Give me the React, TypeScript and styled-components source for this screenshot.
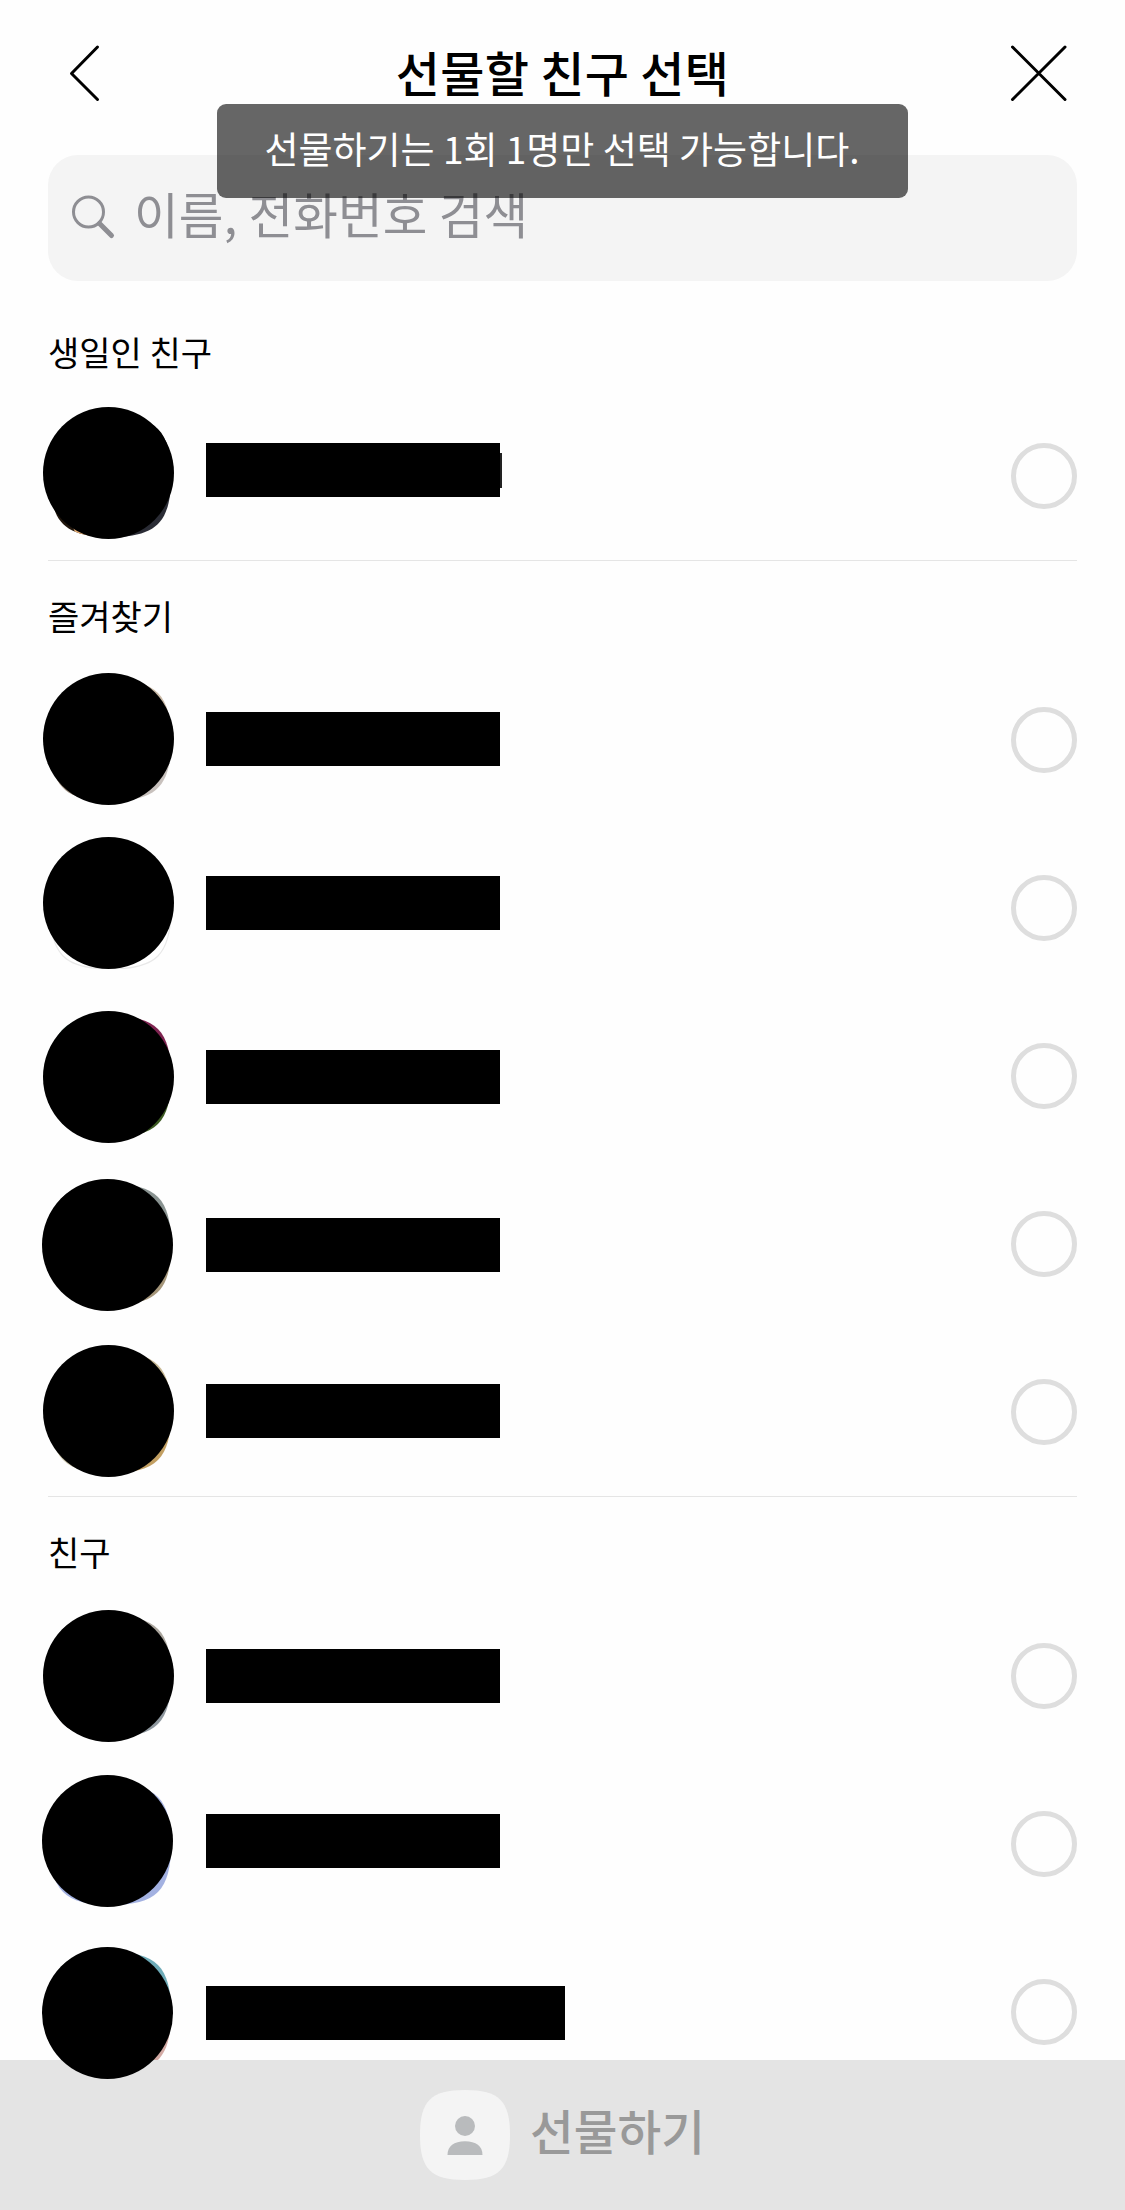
import React from 'react';
import styled, { createGlobalStyle } from 'styled-components';

const GlobalStyle = createGlobalStyle`
  * { box-sizing: border-box; }
  body {
    margin: 0;
    background: #fefefe;
    color: #000;
    font-family: "Noto Sans CJK KR", "Noto Sans", sans-serif;
  }
  button, input { font: inherit; border: 0; padding: 0; background: none; }
`;

const SQUIRCLE = 'M0 60C0 14.5 14.5 0 60 0C105.5 0 120 14.5 120 60C120 105.5 105.5 120 60 120C14.5 120 0 105.5 0 60Z';

const Screen = styled.main`
  position: relative;
  display: flex;
  flex-direction: column;
  width: 1125px;
  height: 2210px;
  overflow: hidden;
  background: #fefefe;
`;

const Header = styled.header`
  display: flex;
  align-items: center;
  justify-content: space-between;
  height: 155px;
  padding: 0 56px 9px 68px;
`;

const IconButton = styled.button`
  display: flex;
  width: 60px;
  height: 60px;
`;

const Title = styled.h1`
  margin: 0 0 0 -12px;
  padding-bottom: 5px;
  font-size: 48px;
  line-height: 60px;
  font-weight: 500;
  letter-spacing: 0.3px;
`;

const Toast = styled.div`
  position: absolute;
  z-index: 5;
  top: 104px;
  left: 217px;
  display: flex;
  align-items: center;
  justify-content: center;
  width: 691px;
  height: 94px;
  padding: 0 1px 6px 0;
  border-radius: 9px;
  background: rgba(0, 0, 0, 0.6);
  color: #fff;
  font-size: 37px;
  line-height: 50px;
  white-space: nowrap;
`;

const SearchBox = styled.label`
  display: flex;
  align-items: center;
  gap: 18px;
  height: 126px;
  margin: 0 48px;
  padding: 0 22px;
  border-radius: 30px;
  background: #f4f4f4;
`;

const SearchText = styled.span`
  padding-bottom: 11px;
  color: #8e8e93;
  font-size: 48.5px;
  line-height: 60px;
  letter-spacing: 0.2px;
`;

const Section = styled.section`
  margin: 0 48px;
  & + & { border-top: 1px solid #e5e5e5; }
`;

const SectionTitle = styled.h2<{ $height: number; $pad: number }>`
  height: ${(p) => p.$height}px;
  margin: 0;
  padding-top: ${(p) => p.$pad}px;
  font-size: 34px;
  line-height: 50px;
  font-weight: 400;
`;

const Row = styled.div`
  display: flex;
  align-items: center;
  height: 168px;
`;

const Avatar = styled.div`
  position: relative;
  flex: none;
  width: 120px;
  height: 120px;
`;

const Photo = styled.svg`
  display: block;
  width: 121px;
  height: 121px;
  margin-left: 1.5px;
`;

const AvatarCover = styled.div<{ $x: number; $y: number }>`
  position: absolute;
  z-index: 3;
  left: ${(p) => p.$x}px;
  top: ${(p) => p.$y}px;
  width: 131px;
  height: 132px;
  border-radius: 50%;
  background: #000;
`;

const NameCell = styled.div`
  display: flex;
  flex: 1;
  align-self: stretch;
  padding-left: 38px;
`;

const NameBar = styled.div<{ $width: number; $top: number }>`
  width: ${(p) => p.$width}px;
  height: 54px;
  margin-top: ${(p) => p.$top}px;
  background: #000;
`;

const NameEdge = styled.div`
  width: 2px;
  height: 35px;
  margin-top: 61px;
  background: #222;
`;

const Radio = styled.button`
  width: 66px;
  height: 66px;
  border: 5px solid #dedede;
  border-radius: 50%;
`;

const Footer = styled.footer`
  position: absolute;
  z-index: 2;
  left: 0;
  right: 0;
  bottom: 0;
  display: flex;
  align-items: center;
  justify-content: center;
  gap: 20px;
  height: 150px;
  background: #e4e4e4;
  color: #999;
`;

const FooterText = styled.span`
  padding-bottom: 10px;
  font-size: 47.5px;
  line-height: 60px;
  font-weight: 500;
`;

/* Photo corners run top-left, top-right, bottom-left, bottom-right. */
type Friend = {
  corners: [string, string, string, string];
  outline?: boolean;
  cover: [number, number];
  barTop: number;
  barWidth?: number;
  edge?: boolean;
};

const birthday: Friend[] = [
  { corners: ['#000', '#000', '#20160c', '#2a2c35'], cover: [-5, -9], barTop: 51, edge: true },
];

const favorites: Friend[] = [
  { corners: ['#eee', '#c9b9a6', '#9b8c7c', '#c8c1bd'], cover: [-5, -7], barTop: 56 },
  { corners: ['#fff', '#fff', '#fff', '#fff'], outline: true, cover: [-5, -11], barTop: 52 },
  { corners: ['#477064', '#7e2350', '#5b8430', '#3c5a22'], cover: [-5, -5], barTop: 58 },
  { corners: ['#000', '#899391', '#000', '#a5967a'], cover: [-6, -5], barTop: 58 },
  { corners: ['#000', '#c5b691', '#c9c3a8', '#c29f62'], cover: [-5, -7], barTop: 56 },
];

const friends: Friend[] = [
  { corners: ['#000', '#aaa59d', '#1a100a', '#8e979e'], cover: [-5, -6], barTop: 57 },
  { corners: ['#a3b1e1', '#a3b1e1', '#a3b1e1', '#a3b1e1'], cover: [-6, -9], barTop: 54 },
  { corners: ['#447e6a', '#6eabb8', '#000', '#d2a9a3'], cover: [-6, -5], barTop: 58, barWidth: 359 },
];

function FriendRow({ friend, id }: { friend: Friend; id: string }) {
  const [tl, tr, bl, br] = friend.corners;
  return (
    <Row>
      <Avatar>
        <Photo viewBox="0 0 120 120">
          <clipPath id={id}><path d={SQUIRCLE} /></clipPath>
          <g clipPath={`url(#${id})`}>
            <rect width="60" height="60" fill={tl} />
            <rect x="60" width="60" height="60" fill={tr} />
            <rect y="60" width="60" height="60" fill={bl} />
            <rect x="60" y="60" width="60" height="60" fill={br} />
            {friend.edge && <path d="M23 111l4 9h22v-9z" fill="#e9b27a" />}
          </g>
          {friend.outline && <path d={SQUIRCLE} fill="none" stroke="#e8e8e8" strokeWidth="1.2" />}
        </Photo>
        <AvatarCover $x={friend.cover[0]} $y={friend.cover[1]} />
      </Avatar>
      <NameCell>
        <NameBar $width={friend.barWidth ?? 294} $top={friend.barTop} />
        {friend.edge && <NameEdge />}
      </NameCell>
      <Radio aria-label="선택" />
    </Row>
  );
}

function FriendSection(props: { title: string; list: Friend[]; height: number; pad: number; id: string }) {
  return (
    <Section>
      <SectionTitle $height={props.height} $pad={props.pad}>{props.title}</SectionTitle>
      {props.list.map((f, i) => <FriendRow key={i} friend={f} id={`${props.id}-${i}`} />)}
    </Section>
  );
}

export default function App() {
  return (
    <>
      <GlobalStyle />
      <Screen>
        <Header>
          <IconButton aria-label="뒤로">
            <svg width="60" height="60" fill="none" stroke="#000" strokeWidth="3" strokeLinecap="round" strokeLinejoin="round">
              <path d="M29.5 4L3.5 30.5L29.5 56.5" />
            </svg>
          </IconButton>
          <Title>선물할 친구 선택</Title>
          <IconButton aria-label="닫기">
            <svg width="60" height="60" fill="none" stroke="#000" strokeWidth="3" strokeLinecap="round">
              <path d="M3.5 4L56 56.5M56 4L3.5 56.5" />
            </svg>
          </IconButton>
        </Header>
        <SearchBox>
          <svg width="46" height="46" fill="none" stroke="#8e8e93" strokeLinecap="round">
            <circle cx="18.5" cy="17" r="15" strokeWidth="3" />
            <path d="M29.5 28.5L41.5 40.5" strokeWidth="5" />
          </svg>
          <SearchText>이름, 전화번호 검색</SearchText>
        </SearchBox>
        <FriendSection id="b" title="생일인 친구" list={birthday} height={111} pad={46} />
        <FriendSection id="f" title="즐겨찾기" list={favorites} height={95} pad={30} />
        <FriendSection id="a" title="친구" list={friends} height={95} pad={30} />
        <Footer>
          <svg width="90" height="90">
            <path d={SQUIRCLE} transform="scale(.75)" fill="#f4f4f4" />
            <circle cx="45" cy="36" r="10" fill="#b9bbbd" />
            <path d="M27.5 65C27.5 56 34 51.3 45 51.3S62.5 56 62.5 65Z" fill="#b9bbbd" />
          </svg>
          <FooterText>선물하기</FooterText>
        </Footer>
        <Toast>선물하기는 1회 1명만 선택 가능합니다.</Toast>
      </Screen>
    </>
  );
}
